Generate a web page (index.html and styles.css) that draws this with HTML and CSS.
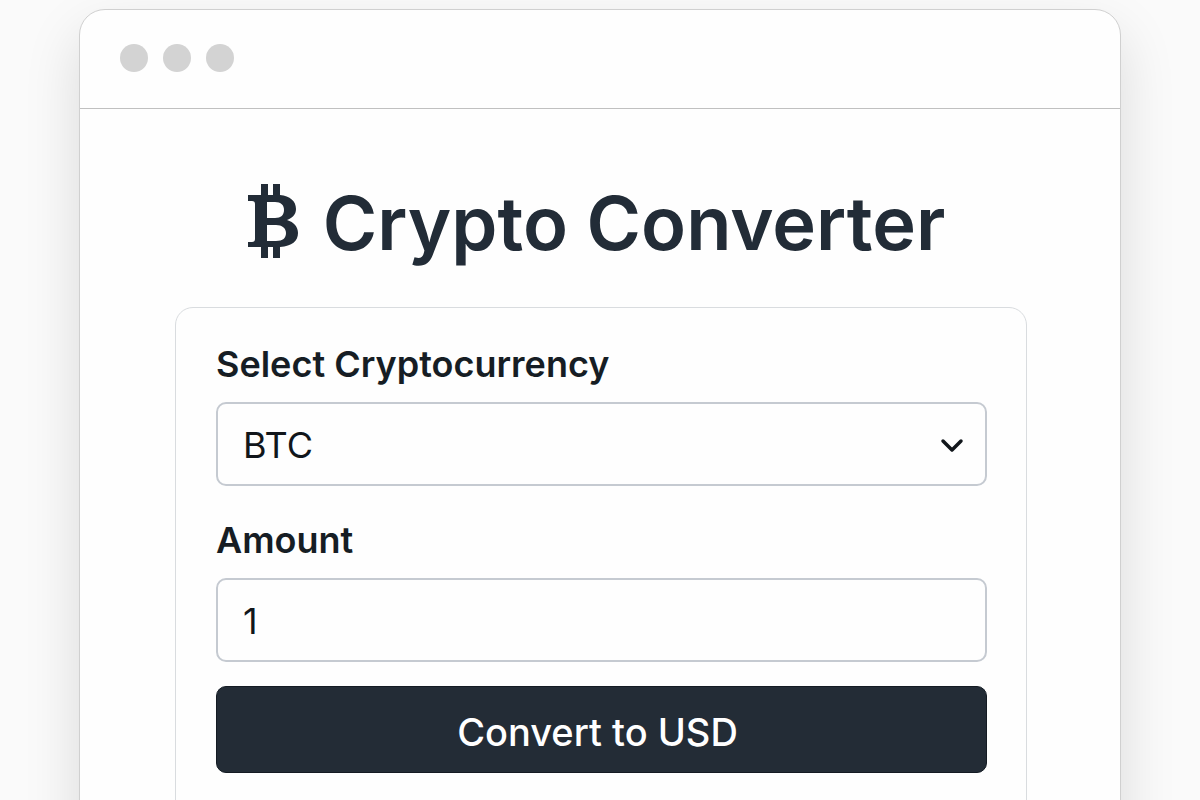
FILE: index.html
```html
<!DOCTYPE html>
<html lang="en">
<head>
<meta charset="utf-8">
<meta name="viewport" content="width=device-width, initial-scale=1">
<title>Crypto Converter</title>
<link rel="stylesheet" href="styles.css">
</head>
<body>
<div class="window">
  <header class="titlebar">
    <span class="dot"></span>
    <span class="dot"></span>
    <span class="dot"></span>
  </header>
  <main class="content">
    <h1 class="title">
      <svg class="logo" viewBox="0 0 52 76" aria-hidden="true">
        <path fill-rule="evenodd" d="M14 1h7v11h5V1h7v11c10 1 16 6 16 14 0 6-4 9-9 11 7 2 11 7 11 13 0 8-6 13-18 14v11h-7V64h-5v11h-7V64H1v-5h4c2 0 3-1 3-3V21c0-2-1-3-3-3H1v-6h13zM20 19v16h8c6 0 9-3 9-8s-3-8-9-8zM20 42v16h9c7 0 10-3 10-8s-4-8-10-8z"/>
      </svg>
      <span class="title-text">Crypto Converter</span>
    </h1>
    <form class="card">
      <div class="field">
        <label class="label" for="coin">Select Cryptocurrency</label>
        <div class="select-wrap">
          <select class="control" id="coin">
            <option>BTC</option>
            <option>ETH</option>
          </select>
          <svg class="chevron" viewBox="0 0 24 16" aria-hidden="true">
            <path d="M3 3l9 9 9-9"/>
          </svg>
        </div>
      </div>
      <div class="field">
        <label class="label" for="amount">Amount</label>
        <input class="control" id="amount" type="text" inputmode="decimal" value="1">
      </div>
      <button class="submit" type="button">Convert to USD</button>
    </form>
  </main>
</div>
</body>
</html>
```
FILE: styles.css
```css
* {
  box-sizing: border-box;
}

body {
  margin: 0;
  height: 100vh;
  overflow: hidden;
  padding: 9px 79px 0;
  background: #fafafa;
  color: #222c37;
  font-family: Inter, "Liberation Sans", sans-serif;
}

.window {
  display: flex;
  flex-direction: column;
  min-height: 120vh;
  background: #fefefe;
  border: 1px solid #d0d0d0;
  border-radius: 26px;
  box-shadow: 0 24px 56px rgba(0, 0, 0, 0.13);
}

.titlebar {
  display: flex;
  align-items: center;
  gap: 15px;
  height: 99px;
  padding: 0 40px 2px;
  border-bottom: 1px solid #c0c0c0;
}

.dot {
  width: 28px;
  height: 28px;
  border-radius: 50%;
  background: #d3d3d3;
}

.content {
  flex: 1;
  display: flex;
  flex-direction: column;
  padding: 62px 93px 0 95px;
}

.title {
  display: flex;
  justify-content: center;
  align-items: center;
  gap: 24px;
  margin: 0 0 36px;
  padding-right: 10px;
  font-size: 74px;
  line-height: 96px;
  font-weight: 600;
  white-space: nowrap;
}

.title-text {
  padding-top: 4px;
}

.logo {
  width: 52px;
  height: 76px;
  fill: #222c37;
}

.card {
  flex: 1;
  padding: 32px 39px 32px 40px;
  border: 1px solid #d9dcdf;
  border-radius: 18px;
}

.field + .field {
  margin-top: 30px;
}

.label {
  display: block;
  margin-bottom: 14px;
  font-size: 36px;
  line-height: 48px;
  font-weight: 600;
  color: #161d24;
}

.select-wrap {
  position: relative;
}

.control {
  display: block;
  width: 100%;
  height: 84px;
  padding: 2px 25px 0;
  border: 2px solid #c5cad1;
  border-radius: 10px;
  background: #fefefe;
  color: #11161b;
  font-family: inherit;
  font-size: 36px;
  appearance: none;
}

.chevron {
  position: absolute;
  right: 23px;
  top: 50%;
  width: 24px;
  height: 16px;
  margin-top: -6px;
  fill: none;
  stroke: #11161b;
  stroke-width: 3.5;
  stroke-linecap: round;
  stroke-linejoin: round;
  pointer-events: none;
}

.submit {
  display: block;
  width: 100%;
  height: 87px;
  margin-top: 24px;
  padding: 4px 8px 0 0;
  border: 1px solid #141b23;
  border-radius: 10px;
  background: #232c36;
  color: #fff;
  font-family: inherit;
  font-size: 38px;
  font-weight: 500;
}
```
